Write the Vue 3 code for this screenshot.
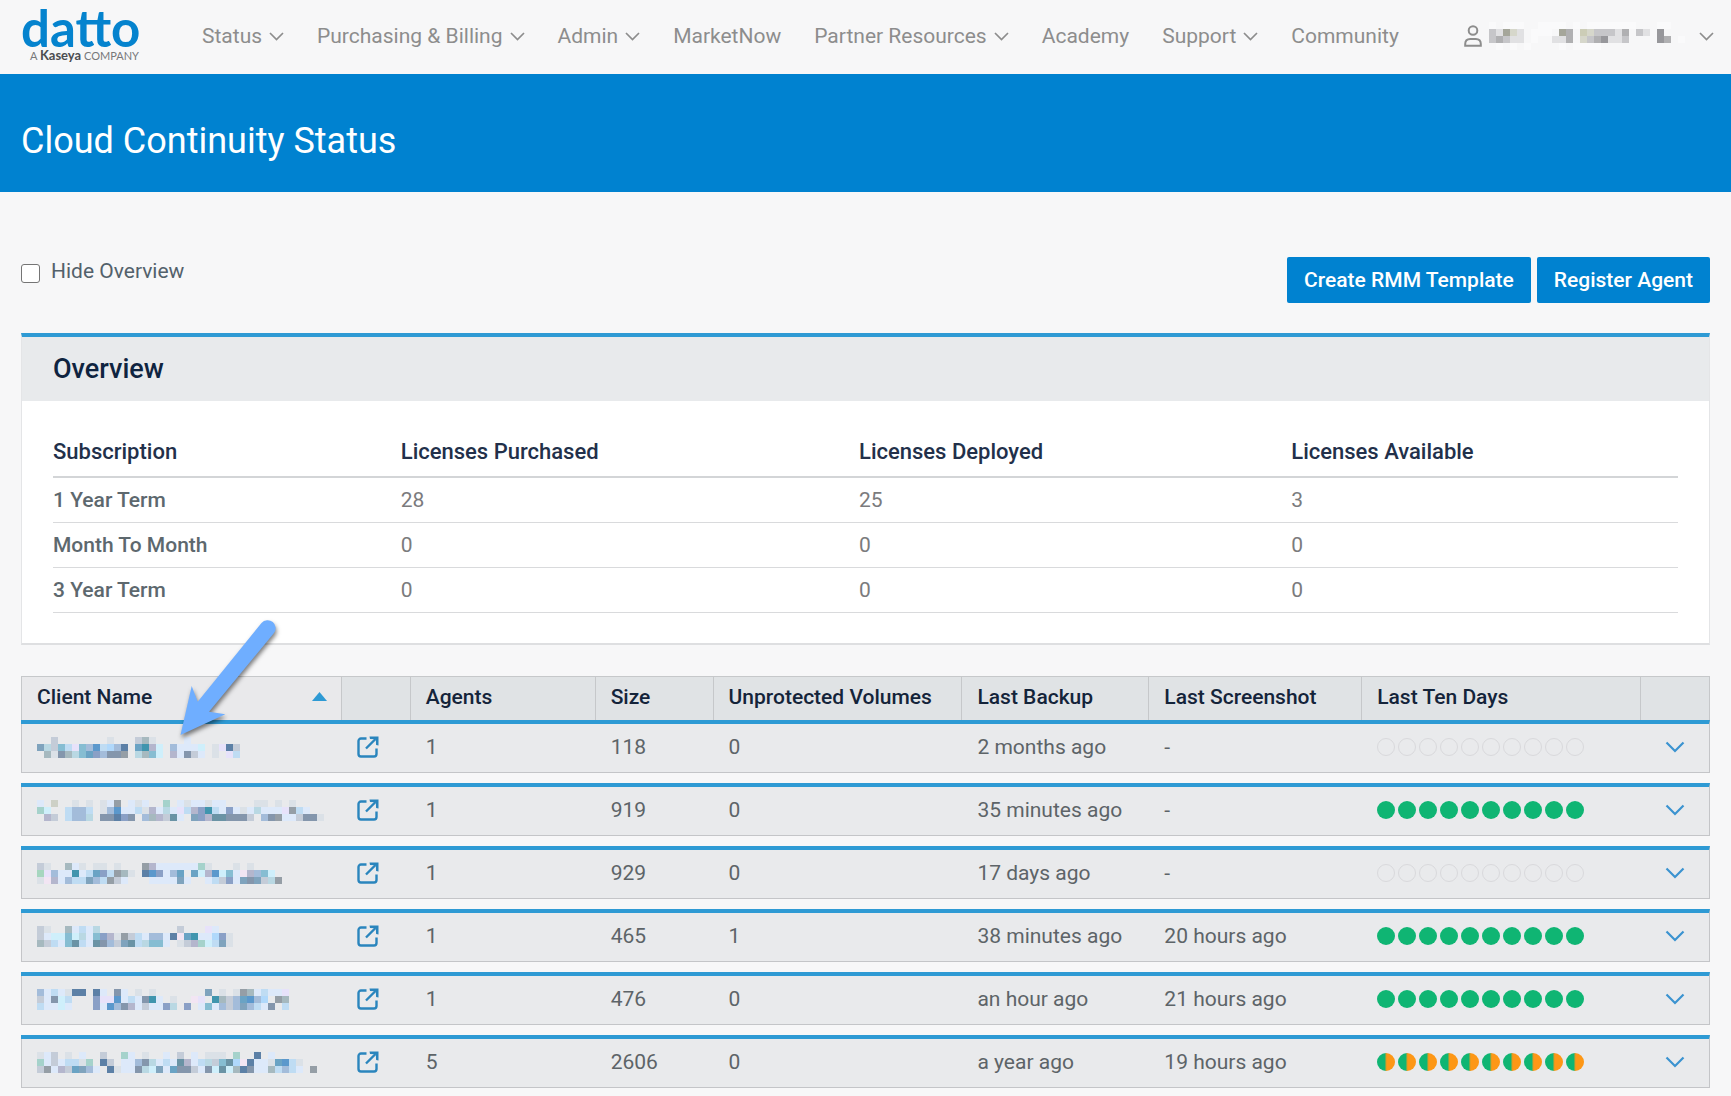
<script setup>
import { ref } from 'vue'

const hideOverview = ref(false)

const navItems = [
  { label: 'Status', menu: true },
  { label: 'Purchasing & Billing', menu: true },
  { label: 'Admin', menu: true },
  { label: 'MarketNow', menu: false },
  { label: 'Partner Resources', menu: true },
  { label: 'Academy', menu: false },
  { label: 'Support', menu: true },
  { label: 'Community', menu: false },
]

const subscriptions = [
  { term: '1 Year Term', purchased: 28, deployed: 25, available: 3 },
  { term: 'Month To Month', purchased: 0, deployed: 0, available: 0 },
  { term: '3 Year Term', purchased: 0, deployed: 0, available: 0 },
]

const columns = ['Client Name', '', 'Agents', 'Size', 'Unprotected Volumes', 'Last Backup', 'Last Screenshot', 'Last Ten Days', '']

// Redacted names are drawn as three lines of coloured tiles, one letter per tile.
const clients = [
  {
    agents: 1, size: 118, volumes: 0, backup: '2 months ago', shot: '-', days: 'none',
    tiles: [
      '..c.......l...ckl....p.......',
      'abcdfgdmhfnmj.ouvq.mpppq.lgjc',
      '.klekbdoimeew.bkdq.vpecp.l.gf',
    ],
  },
  {
    agents: 1, size: 919, volumes: 0, backup: '35 minutes ago', shot: '-', days: 'ok',
    tiles: [
      'p.x..l.l.lpw.plp..t.plpplpp....ll.l.l....',
      'tq..fmmf.lmhppflvpbpgfviufpiplpbpppgwfp..',
      '.vc.fmmb.eejie.mkvcrp.aivrreeec.mewppceel',
    ],
  },
  {
    agents: 1, size: 929, volumes: 0, backup: '17 days ago', shot: '-', days: 'none',
    tiles: [
      'cl..kpl.ll.l...wvpppppptl...l.l.....',
      'ygmppupfoifwkl.jhipmo.oqvhqdpsvmdq..',
      'lsvpmffamfwcp...ppppap..pfcipaeacbw.',
    ],
  },
  {
    agents: 1, size: 465, volumes: 1, backup: '38 minutes ago', shot: '20 hours ago', days: 'ok',
    tiles: [
      'cl..kpfpb...........c...gp..',
      'cpqqdqbpdivlwcfpmmpjsouppnil',
      'kcfpdrfpremcarfbddp.lcvtqfal',
    ],
  },
  {
    agents: 1, size: 476, volumes: 0, backup: 'an hour ago', shot: '21 hours ago', days: 'ok',
    tiles: [
      'mpfpljj.jp.ep.l.l.......a.l.lwkpfppg',
      'cpeqf...igghpfpeup.l..sg.ukcmohmn.wk',
      'fppqp...iphmevpcppib.i.pdpmcmamfpe.f',
    ],
  },
  {
    agents: 5, size: 2606, volumes: 0, backup: 'a year ago', shot: '19 hours ago', days: 'mixed',
    tiles: [
      'lpc.l.p..c..tp.l..p.c.p.lll.t..j.p......',
      'tpcpfflt.jc.ppmebpfprvpfbcdrnsjpplohfl..',
      'cwpvcoamp.jlppebqapoeecpeqrqkjeppkfmfp.w',
    ],
  },
]

const tileColors = {
  a: '#7fa3bd', b: '#b9d8e3', c: '#c4ccd8', d: '#86bdd2', e: '#8496ac', f: '#bfdcf3',
  g: '#e7e2fa', h: '#5b98cc', i: '#8aa0c6', j: '#5c80a6', k: '#a6b9bf', l: '#dbe1e7',
  m: '#a3bcda', n: '#b0d8fb', o: '#6aa3c4', p: '#dde9fa', q: '#cfeffb', r: '#6a93a5',
  s: '#f2e5f3', t: '#a5d2cb', u: '#4095ae', v: '#b4b6cd', w: '#959ea6', x: '#cdd0c6',
  y: '#a6d6bf',
}

const userTiles = [
  'a.aaa..aaaa.a.aaaaaaa...aa...',
  'cbdgb.aaa.de.hgcccbe.cb.f....',
  'cecbb.a..bbe.gcefbbc....fe.a.',
  '.a.a.a....a.aaaa.............',
]
const userColors = {
  a: '#fafafb', b: '#e1e1e3', c: '#c6c6c9', d: '#a5a69a', e: '#b0b0b2', f: '#97979b', g: '#d6d7cb', h: '#cccdb7',
}
</script>

<template>
  <div class="page">
    <header class="topbar">
      <a class="logo" href="#" aria-label="datto, a Kaseya company">
        <span class="logo-name">datto</span>
        <span class="logo-sub">A <b>Kaseya</b> COMPANY</span>
      </a>
      <nav class="nav">
        <template v-for="item in navItems" :key="item.label">
          <button v-if="item.menu" type="button" class="nav-item">
            {{ item.label }}
            <svg class="nav-chevron" viewBox="0 0 15 9"><path d="M1 1l6.500 6.500L14 1" /></svg>
          </button>
          <a v-else class="nav-item" href="#">{{ item.label }}</a>
        </template>
      </nav>
      <button type="button" class="nav-item user" aria-label="Account">
        <svg class="user-icon" viewBox="0 0 18 22">
          <circle cx="9" cy="5.500" r="4.300" />
          <path d="M1.200 20.800v-1.800c0-3 2-5 5-5h5.600c3 0 5 2 5 5v1.800z" />
        </svg>
        <svg class="user-name" viewBox="0 0 203 28" shape-rendering="crispEdges">
          <template v-for="(line, y) in userTiles" :key="y">
            <template v-for="(t, x) in line" :key="x">
              <rect v-if="t !== '.'" :x="x * 7" :y="y * 7" width="7" height="7" :fill="userColors[t]" />
            </template>
          </template>
        </svg>
        <svg class="nav-chevron" viewBox="0 0 15 9"><path d="M1 1l6.500 6.500L14 1" /></svg>
      </button>
    </header>

    <div class="banner"><h1>Cloud Continuity Status</h1></div>

    <main class="content">
      <div class="toolbar">
        <label class="toggle" for="hide-overview">
          <input id="hide-overview" v-model="hideOverview" type="checkbox" />
          <span>Hide Overview</span>
        </label>
        <div class="actions">
          <button type="button" class="primary">Create RMM Template</button>
          <button type="button" class="primary">Register Agent</button>
        </div>
      </div>

      <section v-if="!hideOverview" class="card">
        <h2>Overview</h2>
        <table class="licenses">
          <colgroup><col class="c1" /><col class="c2" /><col class="c3" /><col /></colgroup>
          <thead>
            <tr>
              <th scope="col">Subscription</th>
              <th scope="col">Licenses Purchased</th>
              <th scope="col">Licenses Deployed</th>
              <th scope="col">Licenses Available</th>
            </tr>
          </thead>
          <tbody>
            <tr v-for="s in subscriptions" :key="s.term">
              <th scope="row">{{ s.term }}</th>
              <td>{{ s.purchased }}</td>
              <td>{{ s.deployed }}</td>
              <td>{{ s.available }}</td>
            </tr>
          </tbody>
        </table>
      </section>

      <section class="clients">
        <table class="client-table">
          <thead>
            <tr>
              <th v-for="(c, i) in columns" :key="i" scope="col">
                {{ c }}
                <svg v-if="i === 0" class="sort" viewBox="0 0 15 9"><path d="M0 9L7.500 0 15 9z" /></svg>
              </th>
            </tr>
          </thead>
          <tbody>
            <tr v-for="(c, i) in clients" :key="i">
              <td>
                <svg class="name" viewBox="0 0 287 21" shape-rendering="crispEdges">
                  <template v-for="(line, y) in c.tiles" :key="y">
                    <template v-for="(t, x) in line" :key="x">
                      <rect v-if="t !== '.'" :x="x * 7" :y="y * 7" width="7" height="7" :fill="tileColors[t]" />
                    </template>
                  </template>
                </svg>
              </td>
              <td>
                <a class="open" href="#" aria-label="Open client">
                  <svg viewBox="0 0 22 22">
                    <path class="line" d="M9.500 2.500H4a2.500 2.500 0 0 0-2.500 2.500v13A2.500 2.500 0 0 0 4 20.500h13a2.500 2.500 0 0 0 2.500-2.500v-5.500M9 12.500L18.500 3" />
                    <path class="head" d="M12.500.500h9v9l-2.400-.600-.300-5.600-5.800-.400z" />
                  </svg>
                </a>
              </td>
              <td>{{ c.agents }}</td>
              <td>{{ c.size }}</td>
              <td>{{ c.volumes }}</td>
              <td>{{ c.backup }}</td>
              <td>{{ c.shot }}</td>
              <td><span class="days"><i v-for="d in 10" :key="d" class="dot" :class="c.days"></i></span></td>
              <td>
                <button type="button" class="expand" aria-label="Expand row">
                  <svg viewBox="0 0 20 12"><path d="M1.500 1.500L10 10l8.500-8.500" /></svg>
                </button>
              </td>
            </tr>
          </tbody>
        </table>
        <svg class="pointer" viewBox="0 0 110 130">
          <path d="M5.500 120L16.700 71l6 15.700L86.500 8a8 8 0 0 1 12.300 10.300L34 96.700l16.300 2.600z" />
        </svg>
      </section>
    </main>
  </div>
</template>

<style>
body {
  margin: 0;
  background: #f7f7f8;
}
</style>

<style scoped>
.page {
  font-family: Roboto, "Liberation Sans", sans-serif;
  font-size: 21px;
  line-height: 24px;
  color: #5d6468;
  background: #f7f7f8;
}
button {
  font: inherit;
  color: inherit;
  background: none;
  border: 0;
  padding: 0;
  cursor: pointer;
}
svg {
  display: block;
  flex: none;
}
.topbar {
  display: flex;
  align-items: center;
  height: 74px;
  padding: 0 17px 2px 21px;
  box-sizing: border-box;
}
.logo {
  width: 181px;
  flex: none;
  font-family: Lato, sans-serif;
  text-decoration: none;
}
.logo-name {
  display: block;
  font-weight: 700;
  font-size: 51px;
  line-height: 38px;
  color: #0583ce;
}
.logo-sub {
  display: block;
  padding-left: 9px;
  font-size: 11px;
  line-height: 16px;
  color: #77787a;
}
.logo-sub b {
  font-size: 13px;
  color: #4c4d50;
}
.nav {
  display: flex;
  gap: 33px;
}
.nav-item {
  display: flex;
  align-items: center;
  gap: 7px;
  color: #8d8d8d;
  text-decoration: none;
  white-space: nowrap;
}
.nav-chevron {
  width: 15px;
  height: 9px;
  fill: none;
  stroke: #8d8d8d;
  stroke-width: 1.7;
}
.user {
  margin-left: auto;
}
.user-icon {
  width: 18px;
  height: 22px;
  fill: none;
  stroke: #8d8d8d;
  stroke-width: 2;
}
.user-name {
  width: 203px;
  height: 28px;
}
.banner {
  display: flex;
  align-items: center;
  height: 118px;
  padding: 0 21px;
  background: #0082d0;
}
h1 {
  margin: 0;
  padding-top: 16px;
  font-size: 36px;
  line-height: 44px;
  font-weight: 400;
  color: #fff;
}
.content {
  padding: 65px 21px 9px;
}
.toolbar {
  display: flex;
  justify-content: space-between;
  align-items: flex-start;
}
.toggle {
  display: flex;
  align-items: flex-end;
  gap: 11px;
  padding-top: 2px;
  color: #53616b;
}
.toggle input {
  appearance: none;
  width: 19px;
  height: 19px;
  margin: 0;
  border: 1px solid #757575;
  border-radius: 3px;
  background: #fff;
}
.toggle input:checked {
  background: #0082d0;
}
.actions {
  display: flex;
  gap: 6px;
}
.primary {
  height: 46px;
  padding: 0 17px;
  border-radius: 2px;
  background: #0082d0;
  color: #fff;
  font-weight: 500;
}
.card {
  margin-top: 30px;
  border: 1px solid #e4e5e7;
  border-top: 4px solid #2e9ad4;
  border-bottom: 2px solid #dedfe1;
  background: #fff;
}
h2 {
  margin: 0;
  padding: 18px 31px;
  background: #e8eaec;
  color: #0f2440;
  font-size: 27px;
  line-height: 28px;
  font-weight: 500;
}
.licenses {
  width: calc(100% - 62px);
  margin: 27px 31px 30px;
  table-layout: fixed;
  border-collapse: separate;
  border-spacing: 0;
  color: #7b7b7d;
}
.licenses .c1 {
  width: 21.4%;
}
.licenses .c2 {
  width: 28.2%;
}
.licenses .c3 {
  width: 26.6%;
}
.licenses th,
.licenses td {
  height: 44px;
  padding: 0;
  border-bottom: 1px solid #d9dadc;
  text-align: left;
  font-weight: 400;
}
.licenses thead th {
  height: 48px;
  border-bottom: 2px solid #d3d5d7;
  color: #22304a;
  font-size: 22px;
  font-weight: 500;
}
.licenses tbody th {
  color: #5d686e;
  font-weight: 500;
}
.clients {
  position: relative;
  margin-top: 31px;
}
.client-table,
.client-table thead,
.client-table tbody {
  display: block;
}
.client-table tr {
  display: grid;
  grid-template-columns: 320fr 69fr 185fr 118fr 249fr 187fr 213fr 279fr 69fr;
}
.client-table thead tr {
  height: 44px;
  box-sizing: border-box;
  border: 1px solid #c6c8ca;
  border-width: 1px 1px 0 0;
  background: #e0e3e5;
}
.client-table th,
.client-table td {
  display: flex;
  align-items: center;
  min-width: 0;
  padding: 0 0 2px 15px;
  border-left: 1px solid transparent;
  text-align: left;
  white-space: nowrap;
}
.client-table th {
  justify-content: space-between;
  padding-bottom: 4px;
  border-left-color: #c6c8ca;
  color: #14243a;
  font-weight: 500;
}
.client-table th:first-child {
  padding-right: 14px;
  background: #e9e9eb;
}
.sort {
  width: 15px;
  height: 9px;
  fill: #2e9ad4;
}
.client-table tbody tr {
  height: 53px;
  box-sizing: border-box;
  margin-bottom: 10px;
  border: 1px solid #c4c5c8;
  border-top: 4px solid #2e9ad4;
  border-left: 0;
  background: #e9eaec;
}
.client-table tbody tr:last-child {
  margin-bottom: 0;
}
.client-table td:first-child {
  border-left-color: #c4c5c8;
}
.name {
  width: 287px;
  height: 21px;
}
.open svg {
  width: 22px;
  height: 22px;
}
.open .line {
  fill: none;
  stroke: #2a85bd;
  stroke-width: 2.4;
}
.open .head {
  fill: #2a85bd;
}
.days {
  display: flex;
  gap: 3px;
}
.dot {
  box-sizing: border-box;
  width: 18px;
  height: 18px;
  border-radius: 50%;
}
.dot.none {
  border: 1px solid #d9d9dc;
}
.dot.ok {
  background: #0fb573;
}
.dot.mixed {
  background: linear-gradient(90deg, #0fb573 42%, #fd9716 54%);
}
.client-table td:last-child {
  padding-left: 24px;
}
.expand svg {
  width: 20px;
  height: 12px;
  fill: none;
  stroke: #3b93d0;
  stroke-width: 2.2;
}
.pointer {
  position: absolute;
  left: 154px;
  top: -61px;
  width: 110px;
  height: 130px;
  overflow: visible;
  fill: #6faeff;
  filter: drop-shadow(1px 3px 2px rgba(0, 0, 0, 0.5));
  pointer-events: none;
}
</style>
